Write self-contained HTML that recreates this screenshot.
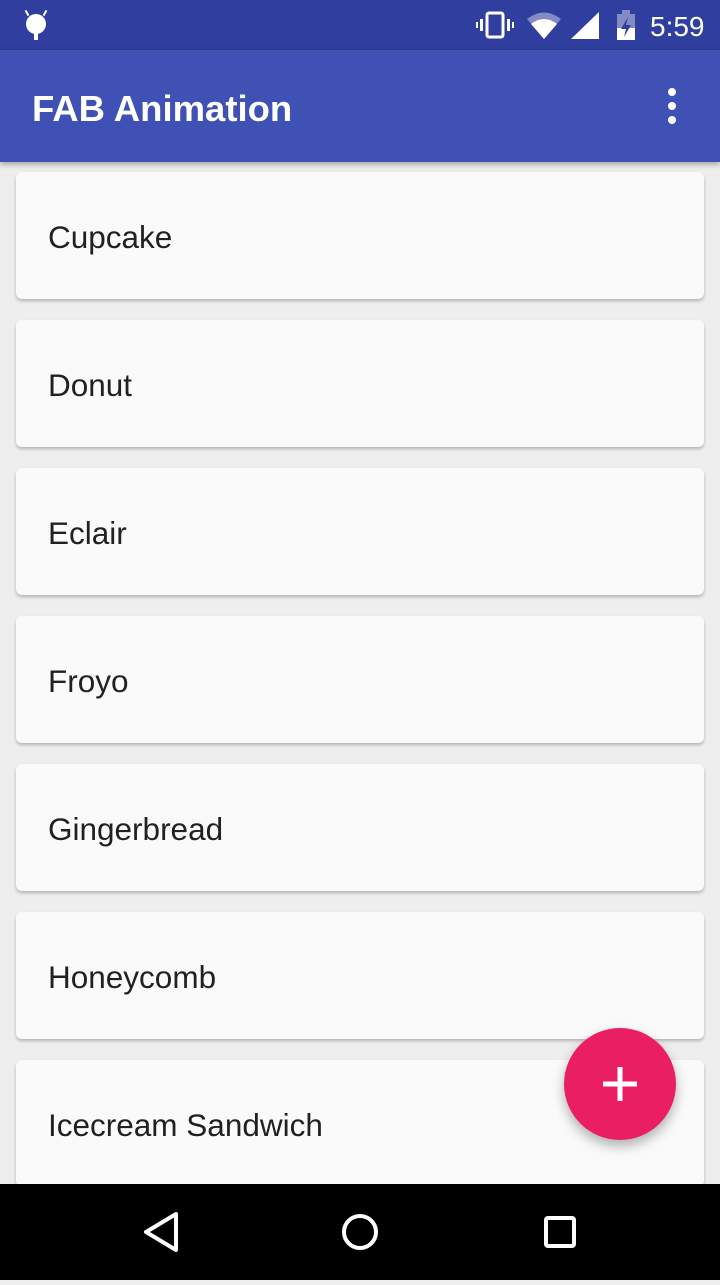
<!DOCTYPE html>
<html><head><style>
body{margin:0;width:720px;height:1280px;overflow:hidden;background:#eeeeee;font-family:"Liberation Sans",sans-serif;position:relative}
.sb{position:absolute;top:0;left:0;width:720px;height:50px;background:#303f9f}
.tb{position:absolute;top:50px;left:0;width:720px;height:112px;background:#3f51b5;box-shadow:0 2px 6px rgba(0,0,0,.35);z-index:2}
.tb h1{margin:0;position:absolute;left:32px;top:37px;color:#fff;font-size:36.5px;font-weight:bold;line-height:44px}
.card{position:absolute;left:16px;width:688px;height:127px;background:#fafafa;border-radius:6px;box-shadow:0 2px 3px rgba(0,0,0,.25)}
.card span{position:absolute;left:32px;top:48px;font-size:31.5px;color:#212121;line-height:34px}
.nav{position:absolute;top:1184px;left:0;width:720px;height:96px;background:#000;z-index:3}
.fab{position:absolute;left:564px;top:1028px;width:112px;height:112px;border-radius:50%;background:#e91e63;box-shadow:0 6px 12px rgba(0,0,0,.3);z-index:2}
</style></head><body>
<div class="sb">
<svg width="720" height="50" style="position:absolute;left:0;top:0" fill="#fff">
<circle cx="36" cy="24" r="10"/><rect x="34" y="28" width="4" height="12"/><rect x="26" y="10" width="2" height="6" transform="rotate(-30 27 13)"/><rect x="44" y="10" width="2" height="6" transform="rotate(30 45 13)"/>
<rect x="487" y="13" width="16" height="24" rx="2" fill="none" stroke="#fff" stroke-width="3"/><rect x="480" y="19" width="3" height="12"/><rect x="507" y="19" width="3" height="12"/><rect x="476" y="22" width="2" height="6"/><rect x="512" y="22" width="2" height="6"/>
<path d="M527 19 Q544 6 561 19 L544 39Z" fill="rgba(255,255,255,.4)"/><path d="M531 24 Q544 14 557 24 L544 39Z"/>
<path d="M571 39 L599 12 L599 39Z"/>
<rect x="617" y="14" width="18" height="26" fill="rgba(255,255,255,.4)"/><rect x="622" y="10" width="8" height="4" fill="rgba(255,255,255,.4)"/><rect x="617" y="28" width="18" height="12"/><path d="M628 17 L621 29 L626 29 L624 37 L631 25 L626 25Z" fill="#303f9f"/>
<text x="650" y="36" font-family="Liberation Sans" font-size="28" fill="#fff">5:59</text>
</svg></div>
<div class="tb"><h1>FAB Animation</h1>
<svg width="20" height="40" style="position:absolute;left:662px;top:36px" fill="#fff"><circle cx="10" cy="6" r="4"/><circle cx="10" cy="20" r="4"/><circle cx="10" cy="34" r="4"/></svg></div>
<div class="card" style="top:172px"><span>Cupcake</span></div>
<div class="card" style="top:320px"><span>Donut</span></div>
<div class="card" style="top:468px"><span>Eclair</span></div>
<div class="card" style="top:616px"><span>Froyo</span></div>
<div class="card" style="top:764px"><span>Gingerbread</span></div>
<div class="card" style="top:912px"><span>Honeycomb</span></div>
<div class="card" style="top:1060px"><span>Icecream Sandwich</span></div>
<div class="fab"><svg width="112" height="112"><path d="M56 39V73M39 56H73" stroke="#fff" stroke-width="5"/></svg></div>
<div class="nav"><svg width="720" height="96" fill="none" stroke="#fff" stroke-width="4">
<path d="M176 30 L146 48 L176 66Z" stroke-linejoin="round"/>
<circle cx="360" cy="48" r="16"/>
<rect x="546" y="34" width="28" height="28" rx="2"/>
</svg></div>
</body></html>
